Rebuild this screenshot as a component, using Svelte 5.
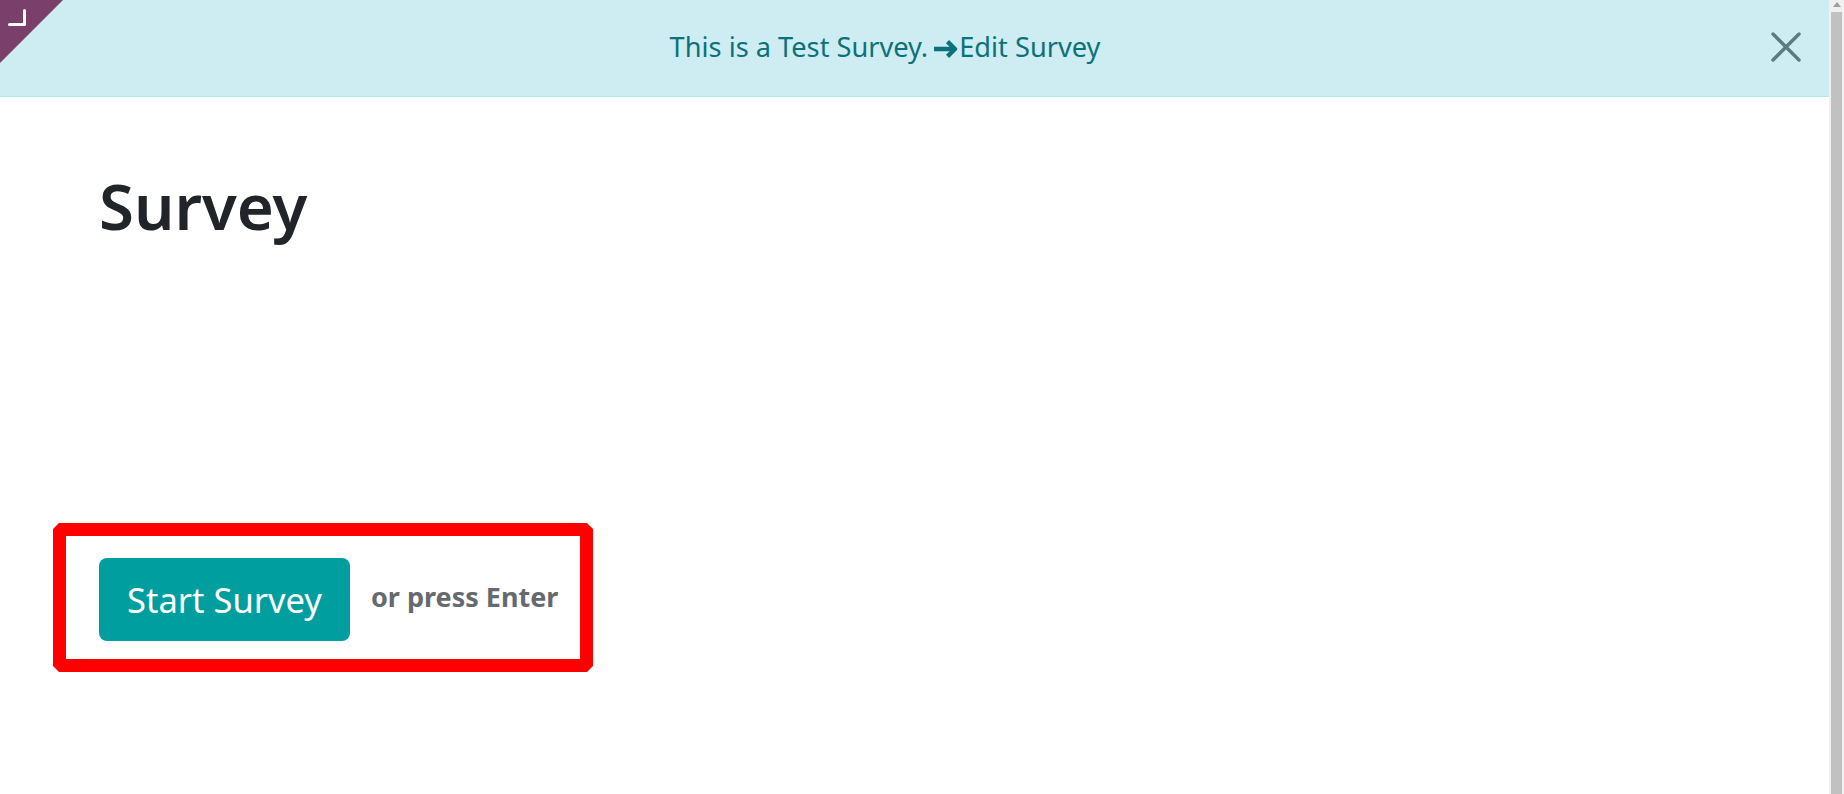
<script>
  let bannerVisible = $state(true);
</script>

<div class="window">
  <div class="page">
    {#if bannerVisible}
      <div class="banner">
        <div class="corner">
          <svg width="18" height="18" viewBox="0 0 18 18" fill="none" stroke="#fff" stroke-width="3" stroke-linecap="round" stroke-linejoin="round">
            <path d="M1.5 15.5H16.5V1.5" />
          </svg>
        </div>
        <p class="banner-text">
          This is a Test Survey.
          <a href="#edit" class="edit">
            <svg class="arrow" width="24" height="18" viewBox="0 0 24 18" fill="none" stroke="#0c7179" stroke-width="4.4" stroke-linejoin="round">
              <path d="M0 9H20.5M13.5 1.6 21 9l-7.5 7.4" />
            </svg>Edit Survey
          </a>
        </p>
        <button class="close" aria-label="Close" onclick={() => (bannerVisible = false)}>
          <svg width="30" height="30" viewBox="0 0 30 30" stroke="#5f7a7e" stroke-width="3.4" stroke-linecap="round">
            <path d="M2 2 28 28M28 2 2 28" />
          </svg>
        </button>
      </div>
    {/if}

    <main class="content">
      <h1>Survey</h1>
      <div class="highlight">
        <button class="start">Start Survey</button>
        <span class="hint">or press Enter</span>
      </div>
    </main>
  </div>

  <div class="scrollbar">
    <span class="scroll-up"></span>
    <div class="thumb"></div>
  </div>
</div>

<style>
  :global(body) {
    margin: 0;
    overflow: hidden;
    background: #fff;
    font-family: "Noto Sans", "Open Sans", sans-serif;
  }

  .window {
    display: flex;
    height: 794px;
  }

  .page {
    flex: 1;
    min-width: 0;
  }

  .banner {
    position: relative;
    display: flex;
    justify-content: center;
    align-items: center;
    box-sizing: border-box;
    height: 97px;
    padding-right: 59px;
    background: #cdedf3;
    border-bottom: 1px solid #b2e7ed;
    overflow: hidden;
  }

  .corner {
    position: absolute;
    top: 0;
    left: 0;
    width: 63px;
    height: 63px;
    background: #7b3f6b;
    clip-path: polygon(0 0, 100% 0, 0 100%);
  }

  .corner svg {
    position: absolute;
    top: 9px;
    left: 8px;
  }

  .banner-text {
    margin: 0 0 3px;
    font-size: 27.2px;
    color: #0c7179;
  }

  .edit {
    color: inherit;
    text-decoration: none;
  }

  .arrow {
    margin: 0 1px 0 -1px;
    vertical-align: -1px;
  }

  .close {
    position: absolute;
    top: 32px;
    right: 28px;
    padding: 0;
    border: 0;
    background: none;
    line-height: 0;
  }

  .content {
    padding: 0 0 0 53px;
  }

  h1 {
    margin: 64px 0 0 46px;
    font-size: 63.5px;
    line-height: 90px;
    font-weight: 600;
    color: #212529;
  }

  .highlight {
    display: flex;
    align-items: center;
    gap: 21px;
    box-sizing: border-box;
    width: 540px;
    height: 149px;
    margin-top: 272px;
    padding: 4px 0 0 33px;
    border: 13px solid #ff0000;
    clip-path: polygon(6px 0, calc(100% - 6px) 0, 100% 6px, 100% calc(100% - 6px), calc(100% - 6px) 100%, 6px 100%, 0 calc(100% - 6px), 0 6px);
  }

  .start {
    width: 251px;
    height: 83px;
    padding: 0;
    border: 0;
    border-radius: 8px;
    background: #009e9f;
    color: #fff;
    font-family: inherit;
    font-size: 34.5px;
  }

  .hint {
    margin-bottom: 6px;
    font-size: 27px;
    font-weight: 700;
    color: #666a6f;
  }

  .scrollbar {
    position: relative;
    box-sizing: border-box;
    width: 15px;
    padding: 12px 2px 0;
    background: #f0f0f0;
  }

  .scroll-up {
    position: absolute;
    top: 2px;
    left: 4px;
    border: 4px solid transparent;
    border-top: 0;
    border-bottom: 5px solid #a0a0a0;
  }

  .thumb {
    height: 100%;
    background: #c1c1c1;
  }
</style>
